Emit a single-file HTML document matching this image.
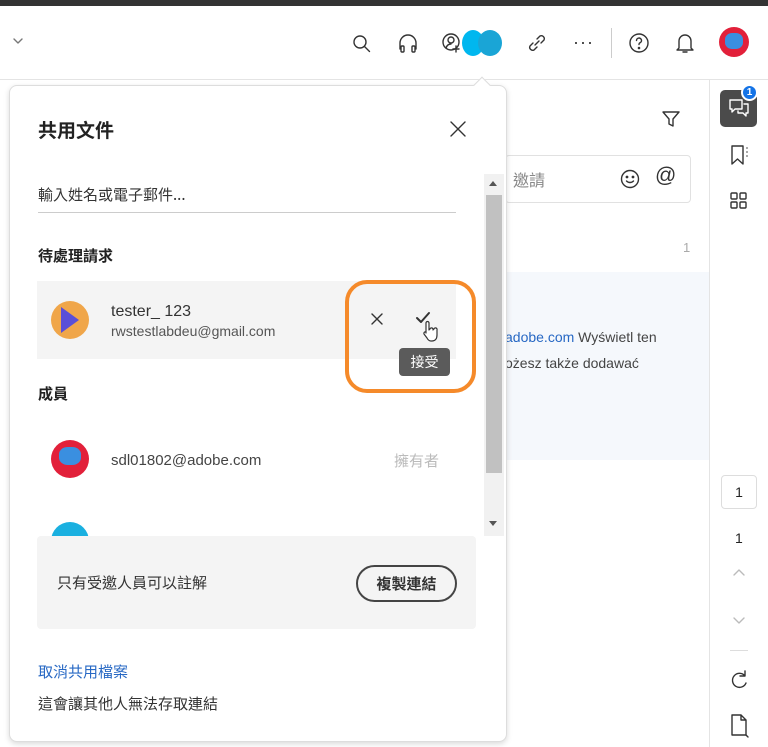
<!DOCTYPE html>
<html><head><meta charset="utf-8"><style>
*{box-sizing:border-box;margin:0;padding:0}
body{width:768px;height:747px;overflow:hidden;background:#fff;font-family:"Liberation Sans","Noto Sans CJK TC",sans-serif;position:relative;color:#222}
.a{position:absolute}
svg{position:absolute;fill:none;stroke:#333;stroke-width:1.4;stroke-linecap:round;stroke-linejoin:round}
.cjk{font-family:"Noto Sans CJK TC",sans-serif}
</style></head><body>
<div class="a" style="left:0;top:0;width:768px;height:6px;background:#333"></div>
<div class="a" style="left:0;top:79px;width:768px;height:1px;background:#e4e4e4"></div>
<svg style="left:12px;top:36px;stroke:#777" width="12" height="10"><path d="M2 3l4 4 4-4"/></svg>
<svg style="left:350px;top:32px" width="24" height="24"><circle cx="10" cy="10" r="6"/><path d="M14.5 14.5l5 5"/></svg>
<svg style="left:396px;top:32px" width="24" height="24"><path d="M4 17v-6a8 8 0 0 1 16 0v6"/><rect x="5" y="14" width="3" height="6" rx="1"/><rect x="16" y="14" width="3" height="6" rx="1"/></svg>
<svg style="left:440px;top:31px" width="24" height="24"><circle cx="11" cy="11" r="8"/><circle cx="11" cy="9" r="3"/><path d="M6 17c1-3 3-4 5-4M16 15v6M13 18h6"/></svg>
<div class="a" style="left:462px;top:30px;width:22px;height:26px;border-radius:50%;background:#00b7ef"></div>
<div class="a" style="left:478px;top:30px;width:24px;height:26px;border-radius:50%;background:#1aa5d6"></div>
<svg style="left:525px;top:31px" width="24" height="24"><path d="M10 14l4-4M8 12l-3 3a3 3 0 0 0 4 4l3-3M16 12l3-3a3 3 0 0 0-4-4l-3 3"/></svg>
<div class="a" style="left:573px;top:32px;font-size:18px;letter-spacing:1px;color:#333">···</div>
<div class="a" style="left:611px;top:28px;width:1px;height:30px;background:#ccc"></div>
<svg style="left:627px;top:31px" width="24" height="24"><circle cx="12" cy="12" r="9"/><path d="M9.5 9.5a2.5 2.5 0 1 1 3.5 2.3c-.8.4-1 1-1 1.7"/><circle cx="12" cy="17" r=".6" fill="#333"/></svg>
<svg style="left:673px;top:30px" width="24" height="26"><path d="M6 18V11a6 6 0 0 1 12 0v7l2 2H4zM10 22h4"/></svg>
<div class="a" style="left:719px;top:27px;width:30px;height:30px;border-radius:50%;background:#e2203a"><div class="a" style="left:6px;top:6px;width:18px;height:16px;border-radius:40%;background:#3a8fe0"></div></div>
<svg style="left:660px;top:108px" width="22" height="22"><path d="M3 4h16l-6 7v7l-4-2v-5z"/></svg>
<div class="a" style="left:505px;top:155px;width:186px;height:48px;border:1px solid #e1e1e1;border-radius:4px"></div>
<div class="a cjk" style="left:513px;top:167px;font-size:16px;color:#888">邀請</div>
<svg style="left:619px;top:168px" width="22" height="22"><circle cx="11" cy="11" r="8.5"/><path d="M7.5 13c2 2 5 2 7 0"/><circle cx="8" cy="9" r=".7" fill="#333"/><circle cx="14" cy="9" r=".7" fill="#333"/></svg>
<div class="a" style="left:655px;top:164px;font-size:21px;color:#333">@</div>
<div class="a" style="left:683px;top:240px;font-size:13px;color:#aaa">1</div>
<div class="a" style="left:505px;top:272px;width:204px;height:188px;background:#f5f8fc"></div>
<div class="a" style="left:505px;top:329px;font-size:14px;color:#444;white-space:nowrap"><span style="color:#2768c4">adobe.com</span> Wyświetl ten</div>
<div class="a" style="left:505px;top:355px;font-size:14px;color:#444">ożesz także dodawać</div>
<div class="a" style="left:709px;top:80px;width:1px;height:667px;background:#e4e4e4"></div>
<div class="a" style="left:720px;top:90px;width:37px;height:37px;border-radius:5px;background:#4b4b4b"></div>
<svg style="left:727px;top:96px;stroke:#fff" width="24" height="24"><path d="M3 4h12v9H8l-3 3v-3H3zM17 8h4v9h-2v3l-3-3h-5v-2"/></svg>
<div class="a" style="left:741px;top:84px;width:17px;height:17px;border-radius:50%;background:#1473e6;border:2px solid #fff;color:#fff;font-size:10px;font-weight:bold;text-align:center;line-height:13px">1</div>
<svg style="left:728px;top:143px" width="24" height="24"><path d="M4 3h11v18l-5.5-5L4 21zM19 5v.1M19 9v.1M19 13v.1"/></svg>
<svg style="left:728px;top:190px" width="24" height="24"><rect x="3" y="3" width="6" height="6" rx="1"/><rect x="12" y="3" width="6" height="6" rx="1"/><rect x="3" y="12" width="6" height="6" rx="1"/><rect x="12" y="12" width="6" height="6" rx="1"/></svg>
<div class="a" style="left:721px;top:475px;width:36px;height:34px;border:1px solid #ddd;border-radius:4px;font-size:14px;text-align:center;line-height:32px">1</div>
<div class="a" style="left:735px;top:530px;font-size:14px">1</div>
<svg style="left:731px;top:566px;stroke:#bbb" width="16" height="14"><path d="M3 9l5-5 5 5"/></svg>
<svg style="left:731px;top:613px;stroke:#bbb" width="16" height="14"><path d="M3 5l5 5 5-5"/></svg>
<div class="a" style="left:730px;top:650px;width:18px;height:1px;background:#ddd"></div>
<svg style="left:728px;top:669px" width="22" height="22"><path d="M17 7a7 7 0 1 0 1 7M17 2v5h-5"/></svg>
<svg style="left:728px;top:713px" width="22" height="26"><path d="M4 2h9l5 5v15H4zM13 2v5h5"/><path d="M18 22l2 2" /></svg>
<div class="a" style="left:9px;top:85px;width:498px;height:657px;background:#fff;border:1px solid #ddd;border-radius:8px;box-shadow:0 2px 6px rgba(0,0,0,.15)"></div>
<div class="a" style="left:476px;top:79px;width:12px;height:12px;background:#fff;border-left:1px solid #ddd;border-top:1px solid #ddd;transform:rotate(45deg)"></div>
<div class="a cjk" style="left:38px;top:116px;font-size:19px;font-weight:bold;color:#222">共用文件</div>
<svg style="left:448px;top:119px" width="20" height="20"><path d="M3 3l14 14M17 3L3 17"/></svg>
<div class="a cjk" style="left:38px;top:184px;font-size:15px;color:#333">輸入姓名或電子郵件...</div>
<div class="a" style="left:38px;top:212px;width:418px;height:1px;background:#ccc"></div>
<div class="a" style="left:484px;top:174px;width:20px;height:362px;background:#f1f1f1"></div>
<div class="a" style="left:486px;top:195px;width:16px;height:278px;background:#c1c1c1"></div>
<div class="a" style="left:489px;top:181px;border:4px solid transparent;border-bottom:5px solid #555;border-top:0"></div>
<div class="a" style="left:489px;top:521px;border:4px solid transparent;border-top:5px solid #555;border-bottom:0"></div>
<div class="a cjk" style="left:38px;top:245px;font-size:15px;font-weight:bold">待處理請求</div>
<div class="a" style="left:37px;top:281px;width:419px;height:78px;background:#f4f4f4"></div>
<div class="a" style="left:51px;top:301px;width:38px;height:38px;border-radius:50%;background:#f0a64a"><div class="a" style="left:10px;top:6px;width:0;height:0;border-top:13px solid transparent;border-bottom:13px solid transparent;border-left:18px solid #5a4fd8"></div></div>
<div class="a" style="left:111px;top:303px;font-size:16px;color:#333">tester_ 123</div>
<div class="a" style="left:111px;top:323px;font-size:14px;color:#555">rwstestlabdeu@gmail.com</div>
<svg style="left:369px;top:311px" width="16" height="16"><path d="M3 3l10 10M13 3L3 13"/></svg>
<svg style="left:414px;top:310px;stroke-width:2" width="18" height="16"><path d="M3 8l4 4 8-9"/></svg>
<svg style="left:420px;top:320px;fill:#fff;stroke-width:1.2" width="20" height="24"><path d="M6 13V3a1.5 1.5 0 0 1 3 0v7l1-1a1.5 1.5 0 0 1 3 1l1-1a1.5 1.5 0 0 1 3 1v5c0 4-2 6-5 6h-1c-2 0-3-1-4-3l-3-4a1.5 1.5 0 0 1 2-2z"/></svg>
<div class="a cjk" style="left:399px;top:348px;width:51px;height:28px;background:#5b5b5b;color:#fff;border-radius:4px;font-size:14px;text-align:center;line-height:28px">接受</div>
<div class="a" style="left:345px;top:280px;width:131px;height:113px;border:4px solid #f58a2a;border-radius:22px"></div>
<div class="a cjk" style="left:38px;top:383px;font-size:15px;font-weight:bold">成員</div>
<div class="a" style="left:51px;top:440px;width:38px;height:38px;border-radius:50%;background:#e2203a"><div class="a" style="left:8px;top:7px;width:22px;height:18px;border-radius:40%;background:#3a8fe0"></div></div>
<div class="a" style="left:111px;top:452px;font-size:15px;color:#444">sdl01802@adobe.com</div>
<div class="a cjk" style="left:394px;top:450px;font-size:15px;color:#bbb">擁有者</div>
<div class="a" style="left:51px;top:522px;width:38px;height:38px;border-radius:50%;background:#1ab0e0"></div>
<div class="a" style="left:37px;top:536px;width:439px;height:93px;background:#f4f4f4;border-radius:4px"></div>
<div class="a cjk" style="left:57px;top:572px;font-size:15px;color:#333">只有受邀人員可以註解</div>
<div class="a cjk" style="left:356px;top:565px;width:101px;height:37px;border:2px solid #444;border-radius:19px;font-size:15px;font-weight:bold;text-align:center;line-height:33px;color:#333">複製連結</div>
<div class="a cjk" style="left:38px;top:661px;font-size:15px;color:#2768c4">取消共用檔案</div>
<div class="a cjk" style="left:38px;top:693px;font-size:15px;color:#333">這會讓其他人無法存取連結</div>
</body></html>
